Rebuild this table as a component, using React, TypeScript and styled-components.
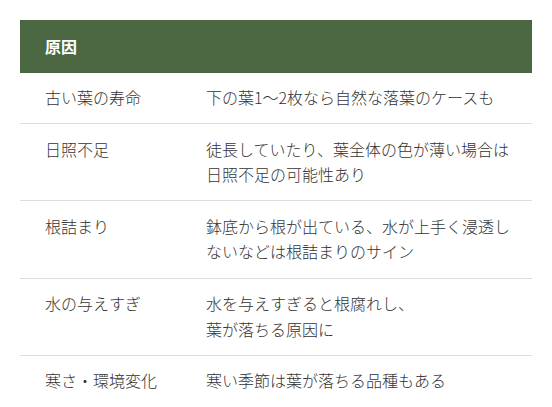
import React from "react";
import styled, { createGlobalStyle } from "styled-components";

const GlobalStyle = createGlobalStyle`
  body {
    margin: 0;
    background: #ffffff;
    font-family: "Noto Sans CJK JP", "Noto Sans", sans-serif;
  }
`;

const Page = styled.div`
  padding: 20px 20px 0 20px;
`;

const Table = styled.table`
  width: 512px;
  border-collapse: collapse;
  font-size: 16px;
  line-height: 1.6;
  color: #333333;
`;

const HeadCell = styled.th`
  background-color: #4b6741;
  color: #ffffff;
  font-weight: 700;
  text-align: left;
  padding: 14px 25px 13px 25px;
`;

const Row = styled.tr`
  border-bottom: 1px solid #dddddd;

  &:last-child {
    border-bottom: none;
  }
`;

const Cell = styled.td<{ $first?: boolean }>`
  vertical-align: top;
  padding: 12.5px ${(p) => (p.$first ? "0" : "10px")} 12.5px ${(p) => (p.$first ? "25px" : "0")};
  width: ${(p) => (p.$first ? "161px" : "auto")};
  font-weight: 300;
  white-space: nowrap;
`;

const rows: { cause: string; lines: string[] }[] = [
  { cause: "古い葉の寿命", lines: ["下の葉1～2枚なら自然な落葉のケースも"] },
  { cause: "日照不足", lines: ["徒長していたり、葉全体の色が薄い場合は", "日照不足の可能性あり"] },
  { cause: "根詰まり", lines: ["鉢底から根が出ている、水が上手く浸透し", "ないなどは根詰まりのサイン"] },
  { cause: "水の与えすぎ", lines: ["水を与えすぎると根腐れし、", "葉が落ちる原因に"] },
  { cause: "寒さ・環境変化", lines: ["寒い季節は葉が落ちる品種もある"] },
];

const App = () => {
  return (
    <Page>
      <GlobalStyle />
      <Table>
        <thead>
          <tr>
            <HeadCell colSpan={2}>原因</HeadCell>
          </tr>
        </thead>
        <tbody>
          {rows.map((r) => (
            <Row key={r.cause}>
              <Cell $first>{r.cause}</Cell>
              <Cell>
                {r.lines.map((l, i) => (
                  <React.Fragment key={i}>
                    {i > 0 && <br />}
                    {l}
                  </React.Fragment>
                ))}
              </Cell>
            </Row>
          ))}
        </tbody>
      </Table>
    </Page>
  );
};

export default App;
